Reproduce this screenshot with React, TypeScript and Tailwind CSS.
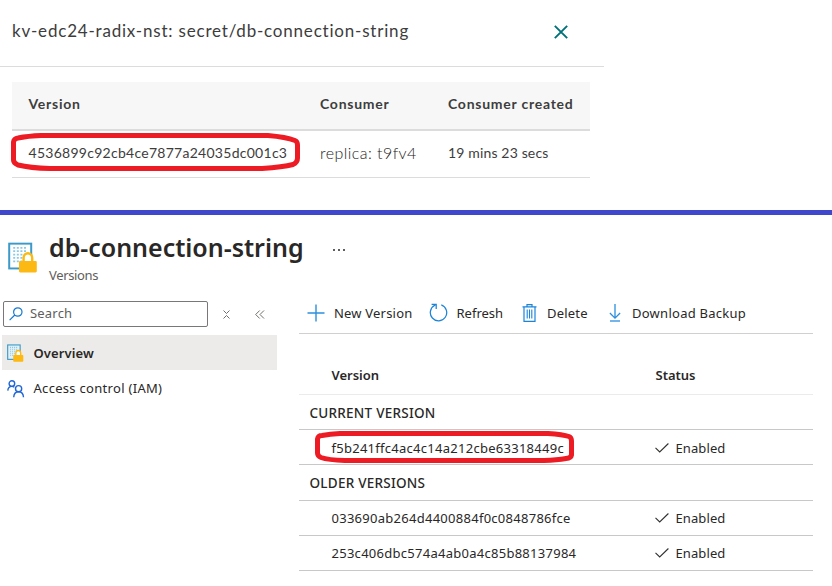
function VaultIcon({ small = false }: { small?: boolean }) {
  return (
    <svg className={small ? "h-[18px] w-[17px]" : "h-[31px] w-[30px]"} viewBox="0 0 30 32" fill="none" preserveAspectRatio="none">
      <rect x="1.2" y="1.7" width="22" height="25.6" fill={small ? "#e4f2f8" : "#fff"} stroke="#3b9ac9" strokeWidth="2" />
      {[6, 9.5, 13, 16.5, 20].map((y) => (
        <path key={y} d={`M5.2 ${y}H19.5`} stroke="#8cc9e4" strokeWidth="1.8" strokeDasharray="2 1.6" />
      ))}
      <path d="M15.6 20V16.5a4.3 4.9 0 0 1 8.6 0V20" fill="#fff" stroke="#fdb913" strokeWidth="2.4" />
      <rect x="11" y="19.5" width="17.8" height="12" rx="1.2" fill="#fdb913" />
    </svg>
  );
}

function PeopleIcon() {
  return (
    <svg className="h-[18px] w-[18px]" viewBox="0 0 18 18" fill="none" stroke="#1f66d6" strokeWidth="1.4">
      <circle cx="4.9" cy="3.6" r="2.8" />
      <path d="M0.8 10.6C1 7.8 2.8 6.4 4.9 6.4c1 0 1.8.3 2.4.8" />
      <circle cx="11.6" cy="8.7" r="3.1" />
      <path d="M6.7 17.2c.2-3.2 2-5.4 4.9-5.4s4.7 2.2 4.9 5.4" />
    </svg>
  );
}

function SearchIcon() {
  return (
    <svg className="h-[14px] w-[14px]" viewBox="0 0 14 14" fill="none" stroke="#1779cf" strokeWidth="1.2">
      <circle cx="8.8" cy="5" r="4.2" />
      <path d="M5.8 8L.6 13.2" />
    </svg>
  );
}

function PlusIcon() {
  return (
    <svg className="h-[18px] w-[18px]" viewBox="0 0 18 18" stroke="#2b8fdf" strokeWidth="1.4">
      <path d="M9 .5v17M.5 9h17" />
    </svg>
  );
}

function RefreshIcon() {
  return (
    <svg className="h-[19px] w-[19px]" viewBox="0 0 19 19" fill="none" stroke="#1b84d9" strokeWidth="1.25">
      <path d="M12.3 1.9a8.2 8.2 0 1 1-6.5.4L7 1.5" />
      <path d="M2.6 1.3h4.6v4.6" />
    </svg>
  );
}

function TrashIcon() {
  return (
    <svg className="h-[18px] w-[15px]" viewBox="0 0 15 18" fill="none" stroke="#1b84d9" strokeWidth="1.2">
      <path d="M.5 2.8h14M5 2.6V.7h5v1.9M2 2.8v14.5h11V2.8" />
      <path d="M5.2 5.5v9M7.5 5.5v9M9.8 5.5v9" strokeWidth="1.1" />
    </svg>
  );
}

function DownloadIcon() {
  return (
    <svg className="h-[18px] w-[12px]" viewBox="0 0 12 18" fill="none" stroke="#2b8fdf" strokeWidth="1.3">
      <path d="M6 0v14M.9 9L6 14.1 11.1 9" />
      <path d="M1 17h10" />
    </svg>
  );
}

function VersionRow({ id, current = false }: { id: string; current?: boolean }) {
  return (
    <div className={`flex h-[35px] items-center border-b border-[#c8c8c8] pl-[32.5px] ${current ? "pt-px" : ""}`}>
      <div className="w-[323.5px] tracking-[0.27px]">{id}</div>
      <svg className="mr-[6.5px] h-[10px] w-[14px]" viewBox="0 0 14 10" fill="none" stroke="#323130" strokeWidth="1.1">
        <path d="M.5 4.8L4.7 9 13.4.5" />
      </svg>
      <span className="tracking-[0.1px]">Enabled</span>
    </div>
  );
}

function SecretPanel() {
  return (
    <section className="h-[210px] w-[604px] font-['Lato',sans-serif] text-[14px] text-[#3d3d3d] [font-variant-ligatures:none]">
      <header className="flex h-[67px] items-center justify-between border-b border-[#dcdcdc] pb-[3px] pl-[12px] pr-[36px]">
        <h2 className="pb-[2px] text-[17px] tracking-[0.8px]">kv-edc24-radix-nst: secret/db-connection-string</h2>
        <svg className="h-[14px] w-[14px]" viewBox="0 0 14 14" stroke="#007079" strokeWidth="1.9">
          <path d="M.8.8l12.4 12.4M13.2.8L.8 13.2" />
        </svg>
      </header>
      <div className="ml-[12px] mt-[15px] w-[578px]">
        <div className="flex h-[49px] items-center border-b-2 border-[#dcdcdc] bg-[#f7f7f7] pb-[4px] pl-[16.5px] font-bold tracking-[0.75px]">
          <div className="w-[291.5px]">Version</div>
          <div className="w-[128px]">Consumer</div>
          <div>Consumer created</div>
        </div>
        <div className="flex h-[47px] items-center border-b border-[#dcdcdc] pb-[3px] pl-[16.5px] tracking-[0.27px]">
          <div className="w-[291.5px]">4536899c92cb4ce7877a24035dc001c3</div>
          <div className="w-[128px] text-[16px] font-light tracking-[0.45px] text-[#222222]">replica: t9fv4</div>
          <div className="tracking-[0.15px]">19 mins 23 secs</div>
        </div>
      </div>
    </section>
  );
}

export default function App() {
  return (
    <main className="relative h-[586px] w-[832px] overflow-hidden bg-white">
      <SecretPanel />
      <div className="h-[5px] bg-[#3f48cc]" />
      <section className="font-['Noto_Sans','Open_Sans',sans-serif] text-[13px] leading-[18px] text-[#292827]">
        <header className="flex h-[77px] pl-[8px] pt-[27px]">
          <VaultIcon />
          <div className="-mt-[12px] ml-[11px]">
            <h1 className="text-[25px] font-semibold leading-[34px] tracking-[-0.02px]">db-connection-string</h1>
            <p className="mt-[2px] tracking-[-0.35px] text-[#605e5c]">Versions</p>
          </div>
          <div className="ml-[29.5px] mt-[7px] flex h-[2px] gap-[3px]">
            <i className="h-[1.5px] w-[2px] bg-[#605e5c]" />
            <i className="h-[1.5px] w-[2px] bg-[#605e5c]" />
            <i className="h-[1.5px] w-[2px] bg-[#605e5c]" />
          </div>
        </header>
        <div className="flex">
          <nav className="w-[299px] pt-[9px]">
            <div className="ml-[3px] flex items-center">
              <div className="flex h-[26px] w-[205px] items-center rounded-[2px] border border-[#7a7876] pl-[5px]">
                <SearchIcon />
                <span className="ml-[7px] pb-[2px] tracking-[0.2px] text-[#605e5c]">Search</span>
              </div>
              <svg className="ml-[15px] h-[9px] w-[7px]" viewBox="0 0 7 9" fill="none" stroke="#605e5c" strokeWidth=".9">
                <path d="M.5.5l3 3 3-3M.5 8.5l3-3 3 3" />
              </svg>
              <svg className="ml-[25px] h-[9px] w-[10px]" viewBox="0 0 10 9" fill="none" stroke="#605e5c" strokeWidth=".9">
                <path d="M4.7.5l-4 4 4 4M9 .5l-4 4 4 4" />
              </svg>
            </div>
            <div className="ml-[2px] mt-[8px] flex h-[35px] w-[275px] items-center bg-[#edebe9] pl-[5px]">
              <VaultIcon small />
              <span className="ml-[9.5px] font-semibold tracking-[0.1px]">Overview</span>
            </div>
            <div className="ml-[2px] flex h-[35px] items-center pl-[5px]">
              <span className="pt-[2px]"><PeopleIcon /></span>
              <span className="ml-[8.5px] tracking-[0.3px]">Access control (IAM)</span>
            </div>
          </nav>
          <div className="w-[514px]">
            <div className="flex h-[42px] items-center border-b border-[#d2d0ce] pl-[8px]">
              <div className="flex w-[122px] items-center gap-[9px] tracking-[0.2px]"><PlusIcon />New Version</div>
              <div className="flex w-[93px] items-center gap-[8.5px] whitespace-nowrap"><RefreshIcon />Refresh</div>
              <div className="flex w-[87px] items-center gap-[10px] tracking-[0.2px]"><TrashIcon />Delete</div>
              <div className="flex items-center gap-[11px] tracking-[0.26px]"><DownloadIcon />Download Backup</div>
            </div>
            <div className="flex h-[61px] items-center border-b border-[#edebe9] pl-[32.5px] pt-[21px] font-semibold">
              <div className="w-[324px]">Version</div>
              <div>Status</div>
            </div>
            <div className="flex h-[35px] items-center border-b border-[#c8c8c8] pl-[10.5px] pt-px text-[13.5px] font-medium tracking-[0.25px]">CURRENT VERSION</div>
            <VersionRow id="f5b241ffc4ac4c14a212cbe63318449c" current />
            <div className="flex h-[36px] items-center border-b border-[#c8c8c8] pl-[10.5px] text-[13.5px] font-medium tracking-[0.25px]">OLDER VERSIONS</div>
            <VersionRow id="033690ab264d4400884f0c0848786fce" />
            <VersionRow id="253c406dbc574a4ab0a4c85b88137984" />
          </div>
        </div>
      </section>
      <svg className="pointer-events-none absolute inset-0 h-full w-full" viewBox="0 0 832 586" fill="none" stroke="#ed1c24" strokeWidth="5" strokeLinejoin="round">
        <path d="M41 135.5H268Q286 137 295 140.5Q297.5 141.5 297.5 145V158Q297.5 162.5 293 164.5Q283 167 262 168.5H50Q30 168 18 165Q13.5 163 13.5 160V142Q14 138.5 18 138Q28 136 41 135.5Z" />
        <path d="M340 433.5H548Q563 434.5 569 436.5Q571.5 437.5 571.5 441V455Q571 458 566 458.5Q557 460 544 460.5H345Q328 460 321 457.5Q317.5 456 317.5 453V439Q318 435.5 322 435.5Q330 434 340 433.5Z" />
      </svg>
    </main>
  );
}
